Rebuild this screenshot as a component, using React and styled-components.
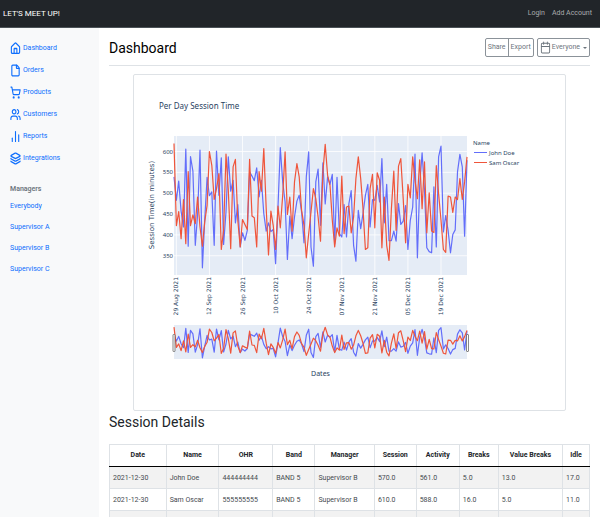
import React from "react";
import styled, { createGlobalStyle } from "styled-components";
import { Home, File, ShoppingCart, Users, BarChart2, Layers, Calendar } from "lucide-react";

const GlobalStyle = createGlobalStyle`
  * { box-sizing: border-box; }
  html { scrollbar-width: none; }
  body {
    margin: 0;
    background: #fff;
    color: #212529;
    font: 7px/11px Roboto, "Noto Sans", sans-serif;
  }
`;

const TopBar = styled.header`
  display: flex;
  align-items: center;
  justify-content: space-between;
  height: 28px;
  padding: 0 8px 0 3px;
  background: #212529;
  border-bottom: 1px solid #4b5257;
`;
const Brand = styled.a`
  color: #fff;
  font-size: 8px;
  text-decoration: none;
`;
const Account = styled.nav`
  display: flex;
  gap: 7px;
`;
const AccountLink = styled.a`
  color: #a9abad;
  font-size: 7px;
  text-decoration: none;
`;
const Page = styled.div`
  display: grid;
  grid-template-columns: 99px minmax(0, 1fr);
  min-height: calc(100vh - 28px);
`;
const Sidebar = styled.aside`
  padding: 9px 10px;
  background: #f8f9fa;
`;
const NavList = styled.ul`
  display: grid;
  grid-auto-rows: ${(p) => p.$row}px;
  align-items: center;
  margin: 0;
  padding: 0;
  list-style: none;
`;
const NavLink = styled.a`
  display: flex;
  align-items: center;
  gap: 2px;
  color: #0d6efd;
  text-decoration: none;
  white-space: nowrap;
  svg { width: 11px; height: 13px; stroke-width: 2.4; overflow: visible; }
`;
const SideHeading = styled.h2`
  margin: 14px 0 0;
  color: #6c757d;
  font-size: 7px;
  font-weight: 600;
  line-height: 13px;
`;
const Main = styled.main`
  padding: 0 10px;
`;
const Heading = styled.div`
  display: flex;
  align-items: center;
  justify-content: space-between;
  height: 38px;
  margin-bottom: 8px;
  padding-top: 2px;
  border-bottom: 1px solid #dee2e6;
`;
const Title = styled.h1`
  margin: 0;
  color: #000;
  font-size: 14px;
  font-weight: 400;
  line-height: 22px;
`;
const Toolbar = styled.div`
  display: flex;
  gap: 3px;
`;
const ButtonGroup = styled.div`
  display: flex;
  border: 1px solid #8b9299;
  border-radius: 2px;
`;
const ToolButton = styled.button`
  display: flex;
  align-items: center;
  gap: 1px;
  height: 17px;
  padding: 0 2px;
  border: 0;
  background: none;
  color: #6c757d;
  font: inherit;
  & + & { border-left: 1px solid #8b9299; }
  svg { width: 11px; height: 13px; stroke-width: 2; }
`;
const Caret = styled.span`
  margin-left: 2px;
  border: 2px solid transparent;
  border-top-color: #6c757d;
  border-bottom: 0;
`;
const ChartCard = styled.section`
  margin: 0 24px;
  border: 1px solid #dee2e6;
  border-radius: 2px;
`;
const Chart = styled.svg`
  display: block;
  width: 100%;
  height: auto;
`;
const ChartText = styled.text`
  fill: #2a3f5f;
  font-family: ${(p) => (p.$wide ? '"DejaVu Sans"' : '"Noto Sans"')}, sans-serif;
  font-size: ${(p) => p.$size || 6}px;
  text-anchor: ${(p) => p.$anchor || "start"};
`;
const Line = styled.polyline`
  fill: none;
  stroke: ${(p) => p.$color};
  stroke-width: 1.2;
  stroke-linejoin: round;
`;
const TableTitle = styled.h2`
  margin: 0 0 11px;
  font-size: 14px;
  font-weight: 400;
  line-height: 22px;
`;
const DataTable = styled.table`
  width: 100%;
  table-layout: fixed;
  border-collapse: collapse;
`;
const Col = styled.col`
  width: ${(p) => p.$share}%;
`;
const HeadCell = styled.th`
  height: 22px;
  padding: 0;
  border: 1px solid #dee2e6;
  border-bottom: 1px solid #000;
  font-weight: 700;
  white-space: nowrap;
`;
const Row = styled.tr`
  &:nth-child(odd) { background: #f2f2f2; }
`;
const Cell = styled.td`
  height: 22px;
  padding: 1px 3px 0;
  border: 1px solid #dee2e6;
  color: #454a4f;
  white-space: nowrap;
`;

const BLUE = "#636efa";
const RED = "#ef553b";

/* Daily session minutes from 28 August to 30 December 2021. */
const john = [
  539, 483, 529, 457, 419, 606, 373, 588, 553, 375, 449, 603, 321, 435, 538, 494, 503, 375, 601, 495,
  585, 377, 455, 587, 505, 531, 429, 473, 371, 405, 387, 411, 551, 541, 530, 561, 491, 531, 451, 409,
  429, 408, 413, 331, 467, 609, 527, 479, 341, 445, 391, 443, 481, 495, 455, 381, 539, 599, 371, 325,
  527, 558, 423, 573, 474, 539, 521, 545, 379, 538, 403, 395, 473, 395, 475, 506, 375, 337, 459, 415,
  451, 495, 521, 419, 485, 483, 519, 479, 583, 429, 521, 386, 386, 409, 385, 475, 425, 433, 470, 365,
  435, 467, 594, 345, 519, 597, 507, 369, 360, 357, 515, 371, 587, 613, 407, 446, 411, 357, 401, 412,
  551, 593, 563, 397, 579
];
const sam = [
  619, 422, 456, 391, 485, 379, 552, 422, 448, 427, 491, 419, 373, 431, 471, 600, 567, 485, 511, 547,
  365, 411, 594, 507, 367, 563, 581, 435, 371, 437, 425, 413, 581, 445, 441, 371, 552, 505, 607, 463,
  352, 457, 423, 365, 469, 417, 495, 599, 449, 491, 409, 527, 571, 539, 459, 423, 345, 403, 455, 511,
  487, 443, 385, 551, 617, 543, 519, 435, 371, 417, 397, 541, 403, 467, 469, 405, 443, 535, 587, 535,
  463, 365, 369, 511, 545, 417, 549, 531, 369, 491, 375, 339, 463, 553, 411, 565, 583, 487, 381, 521,
  489, 587, 531, 487, 580, 463, 575, 405, 501, 409, 406, 566, 499, 435, 365, 358, 493, 491, 454, 491,
  485, 535, 485, 527, 587
];
const dates = [
  "29 Aug 2021", "12 Sep 2021", "26 Sep 2021", "10 Oct 2021", "24 Oct 2021",
  "07 Nov 2021", "21 Nov 2021", "05 Dec 2021", "19 Dec 2021"
];
const STEP = 293 / 124;
const plotY = (v) => 76.5 + (600 - v) * 0.417;
const sliderY = (v) => 252 + (620 - v) * 0.103;
const points = (data, y) =>
  data.map((v, i) => `${(40 + i * STEP).toFixed(1)},${y(v).toFixed(1)}`).join(" ");

function SessionChart() {
  return (
    <Chart viewBox="0 0 431 335" role="img" aria-label="Per Day Session Time">
      <ChartText x="25" y="34" $size={8}>Per Day Session Time</ChartText>
      <rect x="40" y="61" width="293" height="139" fill="#e5ecf6" />
      {[600, 550, 500, 450, 400, 350].map((v) => (
        <g key={v}>
          <path d={`M40 ${plotY(v)}h293`} stroke="#fff" strokeWidth="0.8" />
          <ChartText x="39" y={plotY(v) + 2} $anchor="end">{v}</ChartText>
        </g>
      ))}
      {dates.map((d, i) => {
        const x = 40 + STEP * (1 + i * 14);
        return (
          <g key={d}>
            <path d={`M${x} 61v139`} stroke="#fff" strokeWidth="0.8" />
            <ChartText $wide $anchor="end" transform={`translate(${x + 2} 202) rotate(-90)`}>{d}</ChartText>
          </g>
        );
      })}
      <Line $color={BLUE} points={points(john, plotY)} />
      <Line $color={RED} points={points(sam, plotY)} />
      <ChartText $wide $size={7} $anchor="middle" transform="translate(20 130) rotate(-90)">
        Session Time(in minutes)
      </ChartText>
      <rect x="40" y="250" width="293" height="34" fill="#e5ecf6" />
      <Line $color={BLUE} points={points(john, sliderY)} />
      <Line $color={RED} points={points(sam, sliderY)} />
      <rect x="39" y="259.5" width="2" height="17" rx="0.5" fill="#fff" stroke="#555" strokeWidth="0.7" />
      <rect x="332.5" y="259.5" width="2" height="17" rx="0.5" fill="#fff" stroke="#555" strokeWidth="0.7" />
      <ChartText x="186.5" y="301" $size={7} $anchor="middle">Dates</ChartText>
      <ChartText x="339" y="70">Name</ChartText>
      <path d="M340 77.5h13" stroke={BLUE} />
      <ChartText x="355" y="80">John Doe</ChartText>
      <path d="M340 87.5h13" stroke={RED} />
      <ChartText x="355" y="90">Sam Oscar</ChartText>
    </Chart>
  );
}

const nav = [
  ["Dashboard", Home], ["Orders", File], ["Products", ShoppingCart],
  ["Customers", Users], ["Reports", BarChart2], ["Integrations", Layers]
];
const managers = ["Everybody", "Supervisor A", "Supervisor B", "Supervisor C"];
const columns = [
  ["Date", 11.8], ["Name", 11], ["OHR", 11.2], ["Band", 8.8], ["Manager", 12.4],
  ["Session", 8.7], ["Activity", 9], ["Breaks", 8.1], ["Value Breaks", 13.4], ["Idle", 5.6]
];
const rows = [
  ["2021-12-30", "John Doe", "444444444", "BAND 5", "Supervisor B", "570.0", "561.0", "5.0", "13.0", "17.0"],
  ["2021-12-30", "Sam Oscar", "555555555", "BAND 5", "Supervisor B", "610.0", "588.0", "16.0", "5.0", "11.0"],
  ["", "", "", "", "", "", "", "", "", ""]
];

export default function App() {
  return (
    <>
      <GlobalStyle />
      <TopBar>
        <Brand href="#">LET'S MEET UP!</Brand>
        <Account>
          <AccountLink href="#">Login</AccountLink>
          <AccountLink href="#">Add Account</AccountLink>
        </Account>
      </TopBar>
      <Page>
        <Sidebar>
          <NavList $row={22}>
            {nav.map(([label, Icon]) => (
              <li key={label}><NavLink href="#"><Icon preserveAspectRatio="none" />{label}</NavLink></li>
            ))}
          </NavList>
          <SideHeading>Managers</SideHeading>
          <NavList $row={21}>
            {managers.map((m) => <li key={m}><NavLink href="#">{m}</NavLink></li>)}
          </NavList>
        </Sidebar>
        <Main>
          <Heading>
            <Title>Dashboard</Title>
            <Toolbar>
              <ButtonGroup>
                <ToolButton>Share</ToolButton>
                <ToolButton>Export</ToolButton>
              </ButtonGroup>
              <ButtonGroup>
                <ToolButton><Calendar preserveAspectRatio="none" />Everyone<Caret /></ToolButton>
              </ButtonGroup>
            </Toolbar>
          </Heading>
          <ChartCard><SessionChart /></ChartCard>
          <TableTitle>Session Details</TableTitle>
          <DataTable>
            <colgroup>{columns.map(([c, w]) => <Col key={c} $share={w} />)}</colgroup>
            <thead>
              <tr>{columns.map(([c]) => <HeadCell key={c} scope="col">{c}</HeadCell>)}</tr>
            </thead>
            <tbody>
              {rows.map((r, i) => (
                <Row key={i}>{r.map((c, j) => <Cell key={j}>{c}</Cell>)}</Row>
              ))}
            </tbody>
          </DataTable>
        </Main>
      </Page>
    </>
  );
}
